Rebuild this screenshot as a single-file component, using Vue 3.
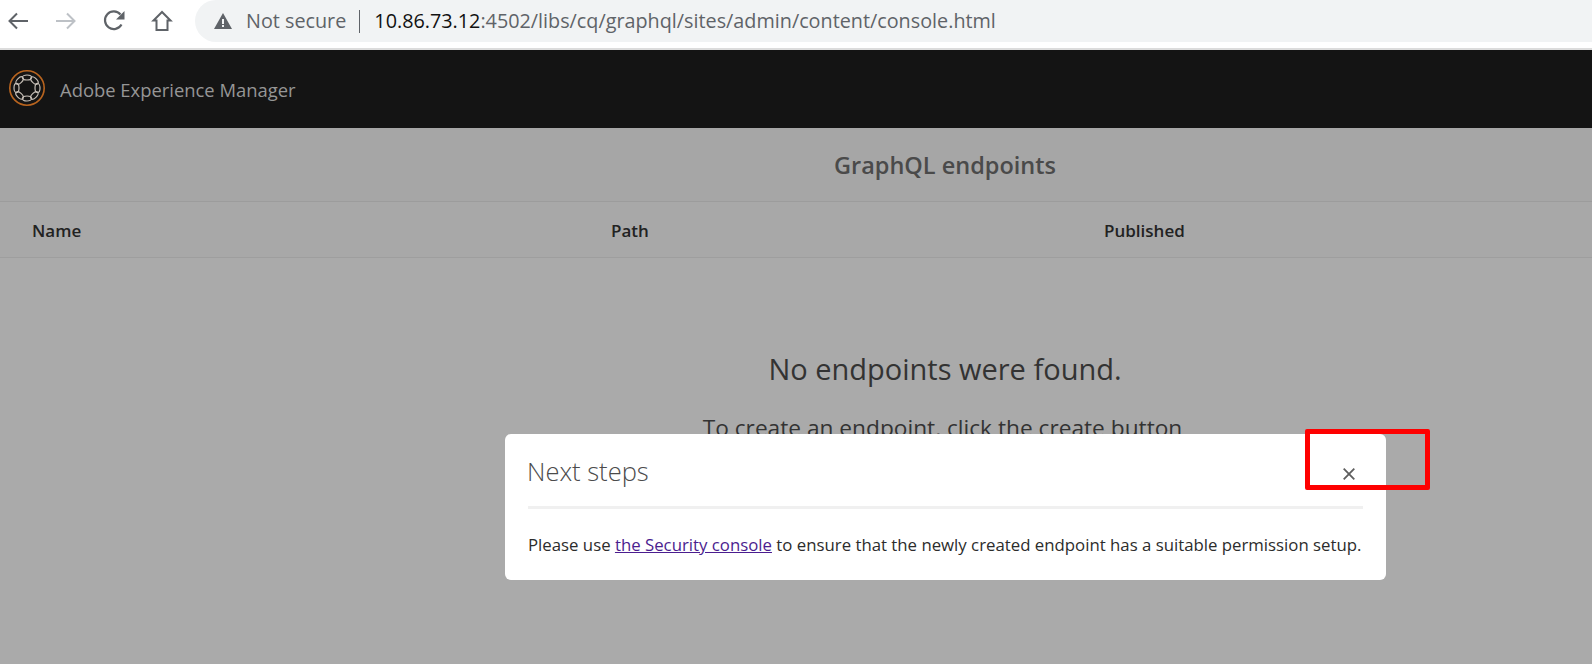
<template>
  <div class="page">
    <div class="toolbar">
      <div class="nav-icons">
        <svg class="nav-icon" width="24" height="24" viewBox="0 0 24 24"><path d="M22 12H3.500M11 4.500 3.500 12l7.500 7.500" fill="none" stroke="#5f6368" stroke-width="2"/></svg>
        <svg class="nav-icon" width="24" height="24" viewBox="0 0 24 24"><path d="M2 12h18.500M13 4.500l7.500 7.500-7.500 7.500" fill="none" stroke="#bdc1c6" stroke-width="2"/></svg>
        <svg class="nav-icon" width="24" height="24" viewBox="0 0 24 24"><path d="M19.500 15.500A8.800 8.800 0 1 1 18.500 5.500" fill="none" stroke="#5f6368" stroke-width="2.200"/><path d="M22.500 2v8.500H14z" fill="#5f6368"/></svg>
        <svg class="nav-icon" width="24" height="24" viewBox="0 0 24 24"><path d="M12 3 3.500 11.500H6.500V21h11v-9.500h3z" fill="none" stroke="#5f6368" stroke-width="2" stroke-linejoin="miter"/></svg>
      </div>
      <div class="omnibox">
        <svg class="warn" width="18" height="16" viewBox="0 0 18 16"><path d="M9 0 18 16H0z" fill="#5f6368"/><path d="M8 6h2v5H8zM8 12h2v2H8z" fill="#f1f3f4"/></svg>
        <span class="not-secure">Not secure</span>
        <span class="sep"></span>
        <span class="url"><span class="host">10.86.73.12</span>:4502/libs/cq/graphql/sites/admin/content/console.html</span>
      </div>
    </div>

    <header class="shell">
      <svg class="logo" width="38" height="38" viewBox="0 0 38 38">
        <circle cx="19" cy="19" r="17.200" fill="none" stroke="#b8641f" stroke-width="1.600"/>
        <g fill="none" stroke="#c4bdb5" stroke-width="1.200">
          <ellipse v-for="a in links" :key="a" cx="19" cy="8.500" rx="4.600" ry="2.500" :transform="`rotate(${a} 19 19)`"/>
        </g>
      </svg>
      <span class="brand">Adobe Experience Manager</span>
    </header>

    <main class="content">
      <h1 class="title">GraphQL endpoints</h1>
      <div class="columns">
        <span>Name</span>
        <span>Path</span>
        <span>Published</span>
      </div>
      <div class="empty">
        <p class="empty-head">No endpoints were found.</p>
        <p class="empty-sub">To create an endpoint, click the create button</p>
      </div>
    </main>

    <div class="modal">
      <div class="modal-head">
        <h2>Next steps</h2>
        <span class="close">
          <svg width="12" height="12" viewBox="0 0 12 12"><path d="M.7.700l10.600 10.600M11.300.700.700 11.300" stroke="#5e5e5e" stroke-width="1.800"/></svg>
        </span>
      </div>
      <p class="modal-text">Please use <a href="#">the Security console</a> to ensure that the newly created endpoint has a suitable permission setup.</p>
    </div>

    <div class="marker"></div>
  </div>
</template>

<script setup>
const links = [0, 45, 90, 135, 180, 225, 270, 315]
</script>

<style>
html, body {
  overflow: hidden;
}
</style>

<style scoped>
.page {
  position: relative;
  width: 1592px;
  height: 664px;
  overflow: hidden;
  background: #aaaaaa;
  font-family: "Open Sans", "Liberation Sans", sans-serif;
}

.toolbar {
  height: 48px;
  background: #fff;
  border-bottom: 2px solid #dcdcdc;
  display: flex;
  align-items: flex-start;
  padding-left: 6px;
}

.nav-icons {
  display: flex;
  gap: 24px;
  padding-top: 9px;
  width: 189px;
  flex: none;
}

.nav-icon {
  display: block;
}

.omnibox {
  flex: 1;
  height: 42px;
  background: #f1f3f4;
  border-radius: 21px 0 0 21px;
  display: flex;
  align-items: center;
  padding-left: 19px;
  color: #5f6368;
  font-size: 19.800px;
  white-space: nowrap;
}

.warn {
  flex: none;
  margin-right: 14px;
}

.not-secure,
.url {
  margin-bottom: 2px;
}

.sep {
  width: 1px;
  height: 23px;
  background: #5f6368;
  margin: 0 14px 0 13px;
}

.host {
  color: #111;
}

.shell {
  height: 78px;
  background: #141414;
  display: flex;
  align-items: center;
  padding-left: 8px;
  padding-bottom: 3px;
  box-sizing: border-box;
}

.logo {
  flex: none;
  margin-right: 14px;
}

.brand {
  color: #969696;
  font-size: 18.400px;
  margin-top: 3px;
}

.title {
  margin: 0;
  height: 73px;
  line-height: 75px;
  padding-left: 298px;
  text-align: center;
  font-size: 23.500px;
  font-weight: 600;
  color: #4a4a4a;
  background: #a6a6a6;
  border-bottom: 1px solid #9c9c9c;
}

.columns {
  height: 56px;
  box-sizing: border-box;
  padding-top: 1px;
  display: grid;
  grid-template-columns: 579px 493px 1fr;
  align-items: center;
  padding-left: 32px;
  font-size: 17px;
  font-weight: 600;
  color: #222;
  background: #a8a8a8;
  border-bottom: 1px solid #9e9e9e;
}

.empty {
  padding-left: 298px;
  text-align: center;
  color: #333;
}

.empty-head {
  margin: 91px 0 0;
  font-size: 29px;
  line-height: 40px;
}

.empty-sub {
  margin: 24px 5px 0 0;
  font-size: 22.700px;
  line-height: 30px;
}

.modal {
  position: absolute;
  left: 505px;
  top: 434px;
  width: 881px;
  height: 146px;
  box-sizing: border-box;
  padding: 0 23px;
  background: #fff;
  border-radius: 6px;
}

.modal-head {
  height: 72px;
  display: flex;
  align-items: center;
  justify-content: space-between;
  border-bottom: 3px solid #f0f0f0;
}

.modal-head h2 {
  margin: 0 0 0 -1px;
  padding-top: 2px;
  font-size: 25.500px;
  font-weight: 300;
  color: #4b4b4b;
}

.close {
  display: flex;
  margin-right: 8px;
  margin-top: 8px;
}

.modal-text {
  margin: 24px 0 0;
  font-size: 16.800px;
  line-height: 24px;
  color: #2c2c2c;
  white-space: nowrap;
}

.modal-text a {
  color: #4b1d8f;
}

.marker {
  position: absolute;
  left: 1305px;
  top: 429px;
  width: 125px;
  height: 61px;
  box-sizing: border-box;
  border: 5px solid #fe0000;
  border-radius: 2px;
}
</style>
